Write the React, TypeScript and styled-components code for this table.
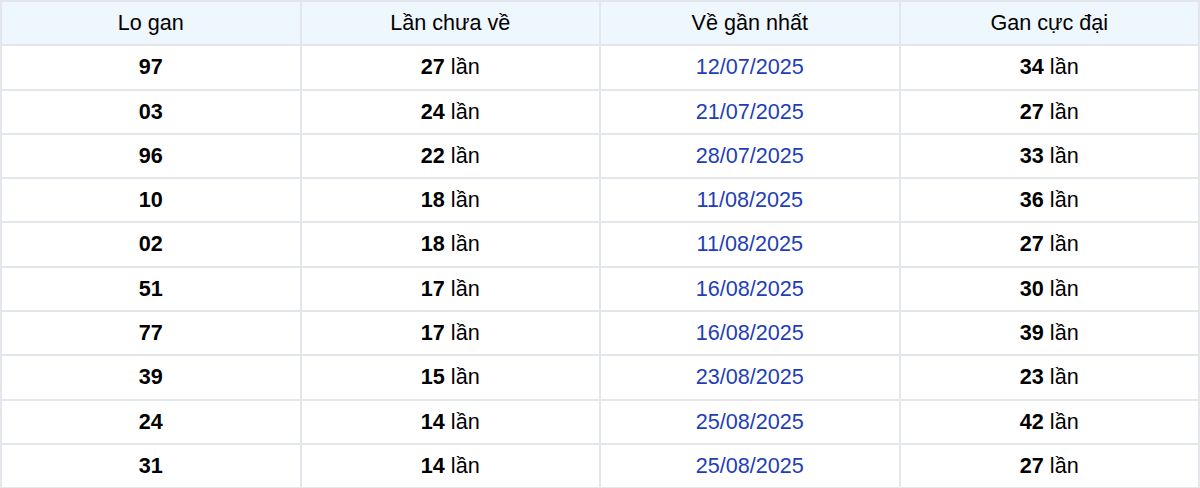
import React from 'react';
import styled, { createGlobalStyle } from 'styled-components';

const GlobalStyle = createGlobalStyle`
  body {
    margin: 0;
    background: #fff;
    font-family: "Liberation Sans", Arial, sans-serif;
  }
`;

const Table = styled.table`
  width: 100%;
  border-collapse: collapse;
  table-layout: fixed;
  font-size: 21.6px;
  color: #000;
`;

const HeadCell = styled.th`
  background: #eef6fe;
  font-weight: 400;
  padding: 9px 10px;
  line-height: 24.3px;
  border: 2px solid #e3e6ea;
  text-align: center;
`;

const Cell = styled.td`
  padding: 9px 10px;
  line-height: 24.3px;
  border: 2px solid #e3e6ea;
  text-align: center;
`;

const Num = styled.b`
  font-weight: 700;
`;

const DateText = styled.span`
  color: #1e3eb6;
`;

const rows: [string, number, string, number][] = [
  ['97', 27, '12/07/2025', 34],
  ['03', 24, '21/07/2025', 27],
  ['96', 22, '28/07/2025', 33],
  ['10', 18, '11/08/2025', 36],
  ['02', 18, '11/08/2025', 27],
  ['51', 17, '16/08/2025', 30],
  ['77', 17, '16/08/2025', 39],
  ['39', 15, '23/08/2025', 23],
  ['24', 14, '25/08/2025', 42],
  ['31', 14, '25/08/2025', 27],
];

export default function App() {
  return (
    <>
      <GlobalStyle />
      <Table>
        <thead>
          <tr>
            <HeadCell>Lo gan</HeadCell>
            <HeadCell>Lần chưa về</HeadCell>
            <HeadCell>Về gần nhất</HeadCell>
            <HeadCell>Gan cực đại</HeadCell>
          </tr>
        </thead>
        <tbody>
          {rows.map(([lo, miss, date, max]) => (
            <tr key={lo}>
              <Cell><Num>{lo}</Num></Cell>
              <Cell><Num>{miss}</Num> lần</Cell>
              <Cell><DateText>{date}</DateText></Cell>
              <Cell><Num>{max}</Num> lần</Cell>
            </tr>
          ))}
        </tbody>
      </Table>
    </>
  );
}
